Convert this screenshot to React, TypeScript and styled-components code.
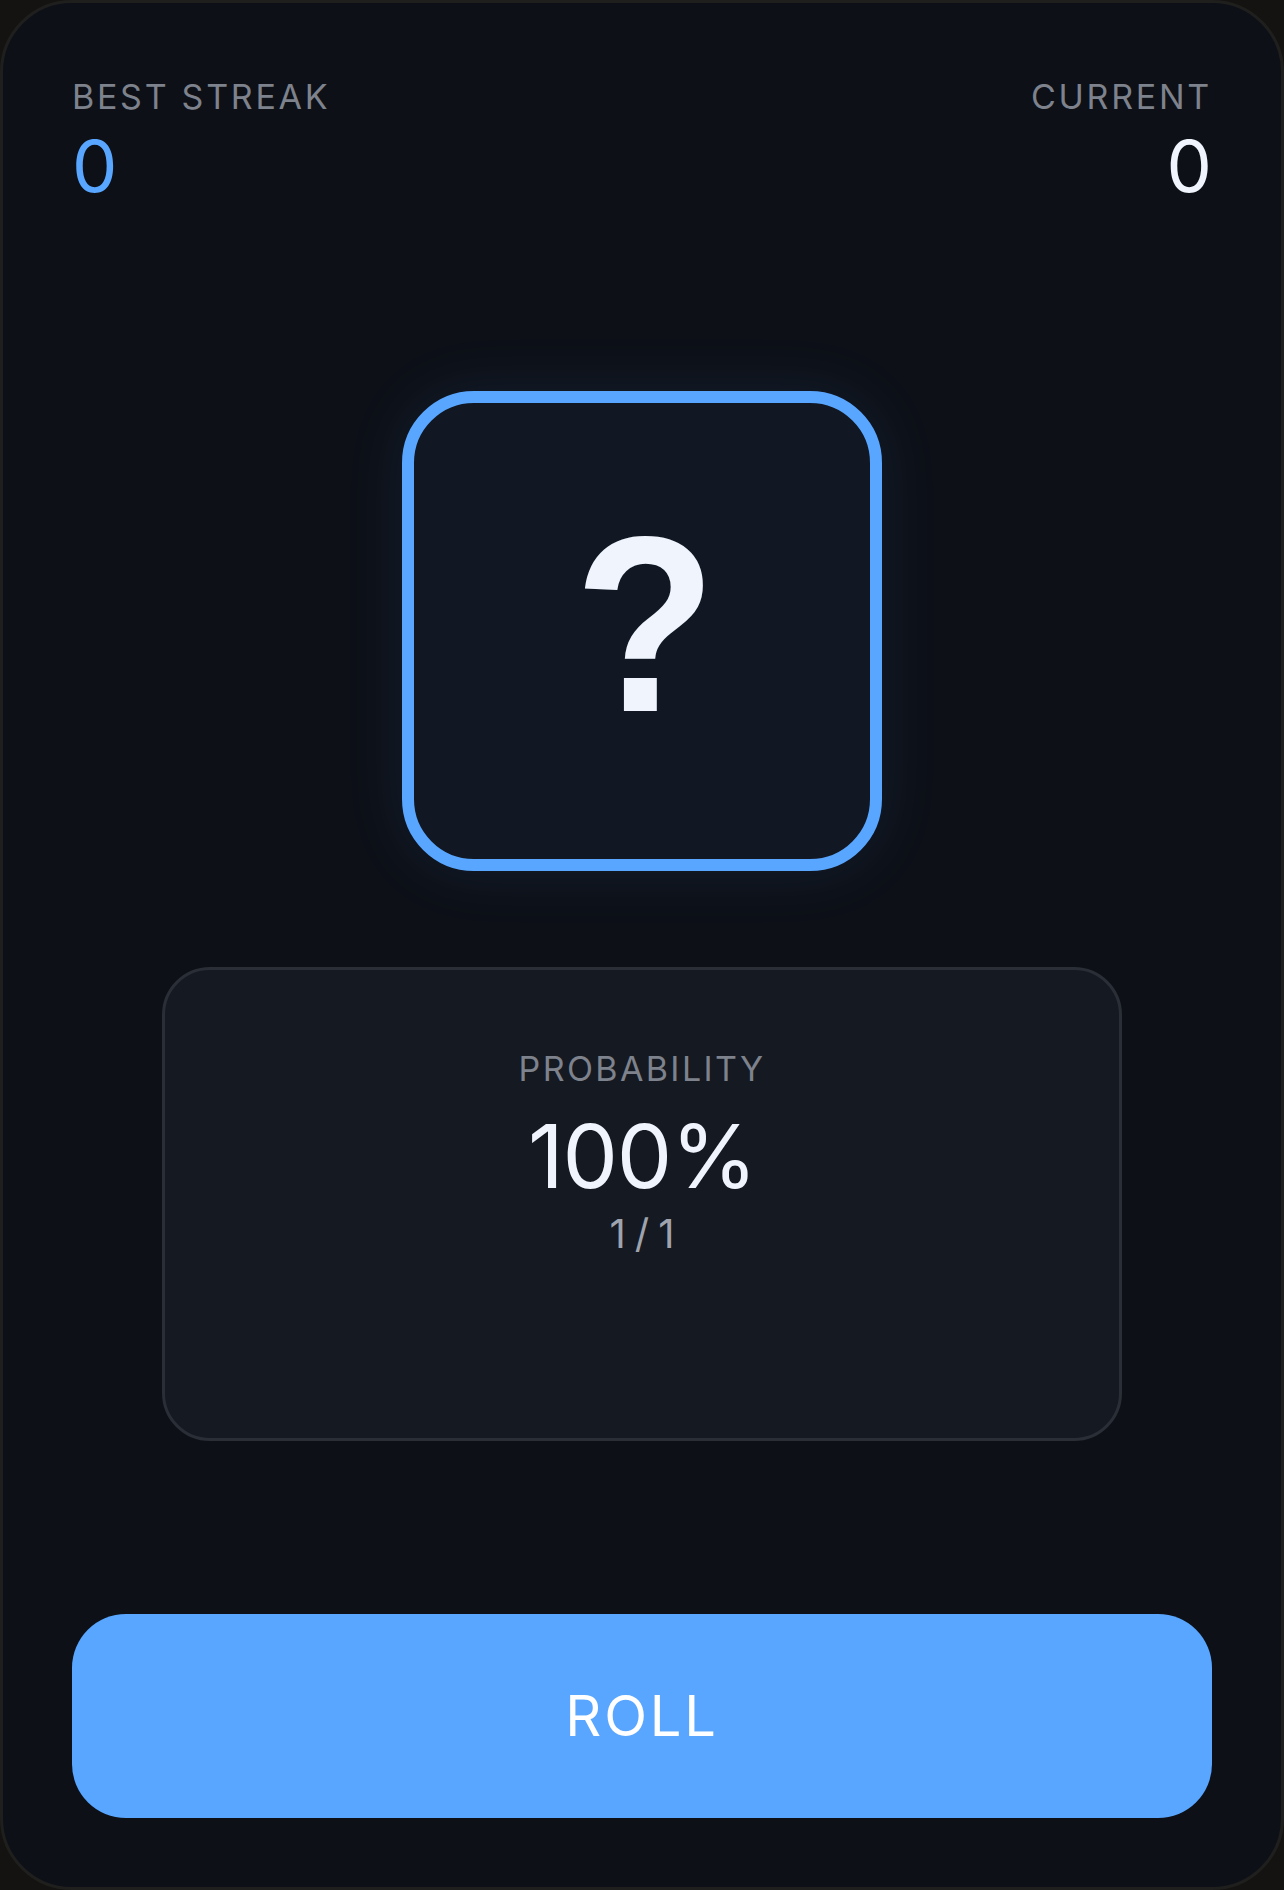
import React from "react";
import styled, { createGlobalStyle } from "styled-components";

const GlobalStyle = createGlobalStyle`
  html, body {
    margin: 0;
    padding: 0;
    background: #141311;
  }
  * { box-sizing: border-box; }
`;

const Shell = styled.div`
  width: 1284px;
  height: 1890px;
  background: #0d1017;
  border: 3px solid #1f1f1e;
  border-radius: 72px;
  padding: 73px 69px 69px;
  display: flex;
  flex-direction: column;
  font-family: Inter, "Noto Sans", sans-serif;
  color: #f0f5fd;
`;

const Header = styled.div`
  display: flex;
  justify-content: space-between;
  align-items: flex-start;
`;

const Stat = styled.div<{ $align: "left" | "right" }>`
  display: flex;
  flex-direction: column;
  align-items: ${(p) => (p.$align === "left" ? "flex-start" : "flex-end")};
  gap: 12px;
`;

const Label = styled.div`
  font-size: 34px;
  line-height: 42px;
  letter-spacing: 0.08em;
  color: #7d828c;
  text-transform: uppercase;
`;

const StatValue = styled.div<{ $accent?: boolean }>`
  font-size: 72px;
  line-height: 72px;
  font-weight: 400;
  color: ${(p) => (p.$accent ? "#58a6ff" : "#f0f5fd")};
`;

const Stage = styled.div`
  flex: 1;
  display: flex;
  flex-direction: column;
  align-items: center;
  padding-top: 189px;
`;

const DieBox = styled.div`
  width: 480px;
  height: 480px;
  border: 12px solid #58a6ff;
  border-radius: 72px;
  background: #111823;
  box-shadow: 0 0 60px rgba(88, 166, 255, 0.1);
  display: flex;
  align-items: center;
  justify-content: center;
`;

const Mark = styled.span`
  font-family: "Liberation Sans", Arial, sans-serif;
  font-weight: 700;
  font-size: 250px;
  line-height: 1;
  color: #f0f5fd;
  transform: translate(3px, -6px) scaleX(0.93);
`;

const ProbCard = styled.div`
  margin-top: 96px;
  width: 960px;
  height: 474px;
  background: #151921;
  border: 3px solid #2a2e36;
  border-radius: 48px;
  display: flex;
  flex-direction: column;
  align-items: center;
  padding-top: 78px;
`;

const ProbLabel = styled(Label)`
  letter-spacing: 0.07em;
`;

const ProbValue = styled.div`
  margin-top: 22px;
  font-size: 88px;
  line-height: 88px;
  letter-spacing: -0.015em;
  color: #f0f5fd;
`;

const Ratio = styled.div`
  margin-top: 10px;
  font-size: 40px;
  line-height: 48px;
  letter-spacing: 9px;
  padding-left: 9px;
  color: #9ea3ad;
`;

const RollButton = styled.button`
  width: 100%;
  height: 204px;
  border: none;
  border-radius: 54px;
  background: #58a6ff;
  color: #ffffff;
  font-family: Inter, "Noto Sans", sans-serif;
  font-size: 56px;
  letter-spacing: 0.05em;
  font-weight: 400;
  cursor: pointer;
  display: flex;
  align-items: center;
  justify-content: center;
`;

export default function App() {
  return (
    <>
      <GlobalStyle />
      <Shell>
        <Header>
          <Stat $align="left">
            <Label>Best Streak</Label>
            <StatValue $accent>0</StatValue>
          </Stat>
          <Stat $align="right">
            <Label>Current</Label>
            <StatValue>0</StatValue>
          </Stat>
        </Header>
        <Stage>
          <DieBox>
            <Mark>?</Mark>
          </DieBox>
          <ProbCard>
            <ProbLabel>Probability</ProbLabel>
            <ProbValue>100%</ProbValue>
            <Ratio>1/1</Ratio>
          </ProbCard>
        </Stage>
        <RollButton>ROLL</RollButton>
      </Shell>
    </>
  );
}
